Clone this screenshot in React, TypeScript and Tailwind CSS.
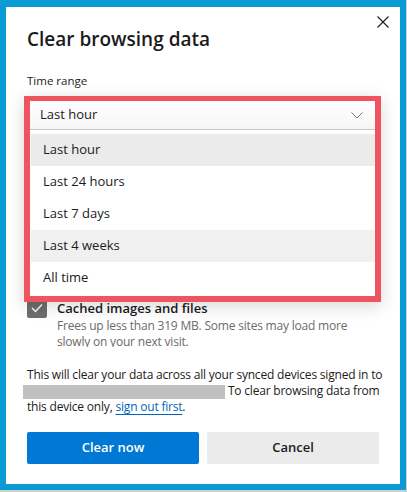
import React from 'react';

const options = ['Last hour', 'Last 24 hours', 'Last 7 days', 'Last 4 weeks', 'All time'];

const rowBg: Record<number, string> = {
  0: 'bg-[#ebebeb]',
  3: 'bg-[#f0f0f0]',
};

export default function App() {
  return (
    <div className="w-[407px] h-[492px] bg-[#d0d0d0] overflow-hidden font-['Open_Sans','Noto_Sans',sans-serif] text-[#1b1b1b]">
      <div className="w-[406px] h-[490px] border-l-[6px] border-t-[7px] border-r-[6px] border-b-[6px] border-[#0a9ad4] bg-white">
        <div className="relative flex flex-col h-full px-[21px] pt-[18px] pb-5">
          {/* close */}
          <button className="absolute top-[9px] right-[11px] w-3 h-3">
            <svg width="12" height="12" viewBox="0 0 12 12">
              <path d="M0.5 0.5 L11.5 11.5 M11.5 0.5 L0.5 11.5" stroke="#1b1b1b" strokeWidth="1.1" fill="none" />
            </svg>
          </button>

          <h1 className="text-[19px] leading-[28px] font-semibold">Clear browsing data</h1>

          <div className="mt-5 text-[11.5px] leading-4">Time range</div>

          {/* highlighted dropdown */}
          <div className="relative z-10 mt-[7px] -ml-[3px] -mr-[2px] border-[6px] border-t-[5px] border-[#ef5461] bg-white pb-[2px] shadow-[0_4px_16px_rgba(0,0,0,0.16)]">
            <div className="flex items-center justify-between h-[29px] pl-[10px] pr-3 border-b border-[#c6c6c6] bg-linear-to-b from-white to-[#f6f6f6]">
              <span className="text-[13px]">Last hour</span>
              <svg width="12" height="7" viewBox="0 0 12 7">
                <path d="M0.5 0.5 L6 6 L11.5 0.5" stroke="#777" strokeWidth="1" fill="none" />
              </svg>
            </div>
            <ul className="mt-1 pl-px">
              {options.map((o, i) => (
                <li key={o} className={`h-8 flex items-center pl-3 text-[13px] ${rowBg[i] ?? ''}`}>
                  {o}
                </li>
              ))}
            </ul>
          </div>

          {/* clipped list area */}
          <div className="h-[45px] overflow-hidden">
            <div className="-mt-1 flex gap-[10px]">
              <div className="w-5 h-5 shrink-0 rounded-[2px] bg-[#6e6e6e] flex items-center justify-center">
                <svg width="12" height="10" viewBox="0 0 12 10">
                  <path d="M1 5 L4.5 8.5 L11 1.5" stroke="white" strokeWidth="1.4" fill="none" />
                </svg>
              </div>
              <div className="whitespace-nowrap">
                <div className="text-[13px] leading-5 font-semibold">Cached images and files</div>
                <div className="text-[12px] leading-4 tracking-[-0.2px] text-[#6b6b6b]">
                  Frees up less than 319 MB. Some sites may load more
                  <br />
                  slowly on your next visit.
                </div>
              </div>
            </div>
          </div>

          <p className="mt-5 text-[12px] leading-4 tracking-[-0.2px] whitespace-nowrap">
            This will clear your data across all your synced devices signed in to
            <br />
            <span className="inline-block align-middle -ml-1 w-[202px] h-[14px] bg-[#c0c0c0]" /> To clear browsing data from
            <br />
            this device only,{' '}
            <a href="#" className="text-[#0067b8] underline underline-offset-[3px]">sign out first</a>.
          </p>

          <div className="mt-[17px] flex gap-2">
            <button className="flex-1 h-8 rounded-[2px] bg-[#0078d4] text-white text-[13px] font-semibold">Clear now</button>
            <button className="flex-1 h-8 rounded-[2px] bg-[#ebebeb] text-[13px] font-semibold">Cancel</button>
          </div>
        </div>
      </div>
    </div>
  );
}
